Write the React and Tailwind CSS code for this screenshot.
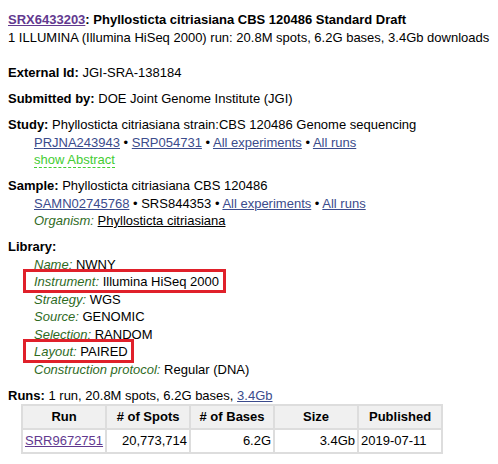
import React from 'react';

const LINK = 'text-[#3b4b8c] underline';
const VISITED = 'text-[#62398f] underline';
const LABEL = 'italic text-[#2f6b1f]';

function Field({ label, children, boxed }) {
  return (
    <div className={boxed ? 'relative' : ''}>
      <span className={LABEL}>{label}:</span> {children}
      {boxed && (
        <span
          className="absolute -left-[11px] -top-[4px] -bottom-[2px] border-[3px] border-[#e0202a]"
          style={{ width: boxed }}
        />
      )}
    </div>
  );
}

function Dot() {
  return <span> • </span>;
}

export default function App() {
  const cols = ['Run', '# of Spots', '# of Bases', 'Size', 'Published'];

  return (
    <div className="p-2 text-[13px] leading-[17.5px] text-black bg-white" style={{ fontFamily: '"Liberation Sans", Arial, sans-serif' }}>
      {/* header */}
      <div className="pt-[3px]">
        <div className="font-bold">
          <a className={VISITED}>SRX6433203</a>: Phyllosticta citriasiana CBS 120486 Standard Draft
        </div>
        <div>1 ILLUMINA (Illumina HiSeq 2000) run: 20.8M spots, 6.2G bases, 3.4Gb downloads</div>
      </div>

      <div className="mt-[18px] flex flex-col gap-[8.5px]">
        <div><b>External Id:</b> JGI-SRA-138184</div>
        <div><b>Submitted by:</b> DOE Joint Genome Institute (JGI)</div>

        <div>
          <div><b>Study:</b> Phyllosticta citriasiana strain:CBS 120486 Genome sequencing</div>
          <div className="pl-[26px]">
            <a className={LINK}>PRJNA243943</a><Dot /><a className={LINK}>SRP054731</a><Dot />
            <a className={LINK}>All experiments</a><Dot /><a className={LINK}>All runs</a>
          </div>
          <div className="pl-[26px]">
            <span className="text-[#44cc33] border-b border-dashed border-[#44cc33]">show Abstract</span>
          </div>
        </div>

        <div>
          <div><b>Sample:</b> Phyllosticta citriasiana CBS 120486</div>
          <div className="pl-[26px]">
            <a className={LINK}>SAMN02745768</a><Dot />SRS844353<Dot />
            <a className={LINK}>All experiments</a><Dot /><a className={LINK}>All runs</a>
          </div>
          <div className="pl-[26px]">
            <span className={LABEL}>Organism:</span> <a className="text-black underline">Phyllosticta citriasiana</a>
          </div>
        </div>

        <div>
          <div><b>Library:</b></div>
          <div className="pl-[26px]">
            <Field label="Name">NWNY</Field>
            <Field label="Instrument" boxed="203px">Illumina HiSeq 2000</Field>
            <Field label="Strategy">WGS</Field>
            <Field label="Source">GENOMIC</Field>
            <Field label="Selection">RANDOM</Field>
            <Field label="Layout" boxed="111px">PAIRED</Field>
            <Field label="Construction protocol">Regular (DNA)</Field>
          </div>
        </div>

        <div>
          <div><b>Runs:</b> 1 run, 20.8M spots, 6.2G bases, <a className={LINK}>3.4Gb</a></div>
          <table className="ml-[13px] border-collapse border-2 border-[#dddddd]">
            <thead>
              <tr className="bg-[#f0f0f0]">
                {cols.map(c => (
                  <th key={c} className="w-[84px] h-[24px] border-2 border-[#dddddd] font-bold text-center px-1">{c}</th>
                ))}
              </tr>
            </thead>
            <tbody>
              <tr>
                <td className="h-[24px] border-2 border-[#dddddd] px-[2px]"><a className={VISITED}>SRR9672751</a></td>
                <td className="border-2 border-[#dddddd] px-[2px] text-right">20,773,714</td>
                <td className="border-2 border-[#dddddd] px-[2px] text-right">6.2G</td>
                <td className="border-2 border-[#dddddd] px-[2px] text-right">3.4Gb</td>
                <td className="border-2 border-[#dddddd] px-[2px]">2019-07-11</td>
              </tr>
            </tbody>
          </table>
        </div>
      </div>
    </div>
  );
}
